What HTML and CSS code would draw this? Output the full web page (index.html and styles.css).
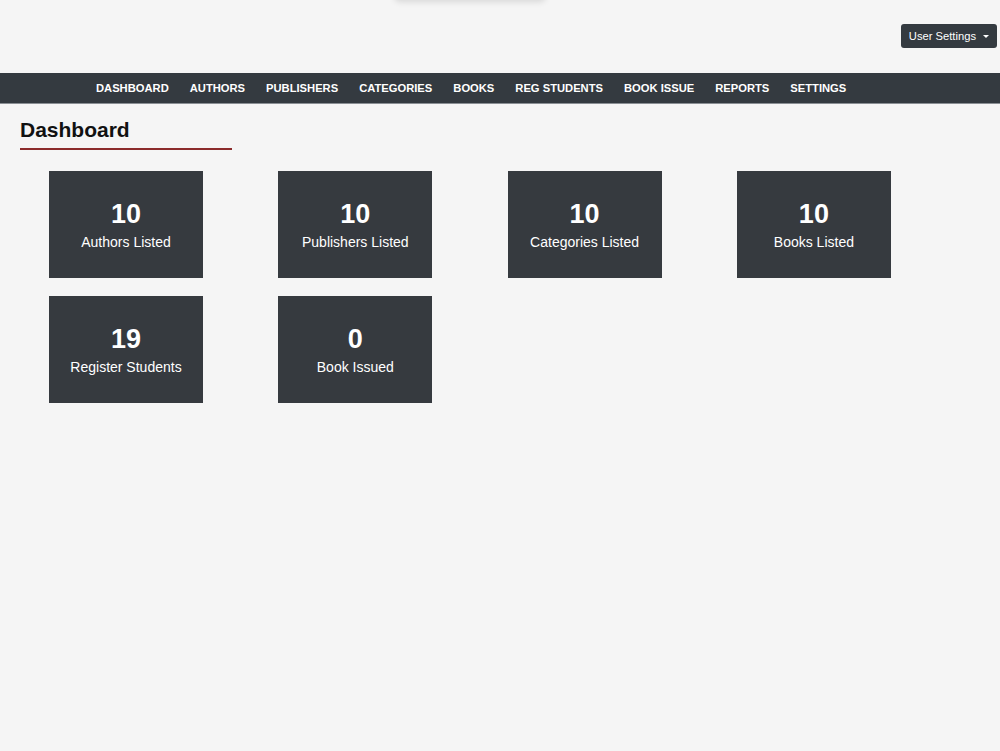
FILE: index.html
```html
<!DOCTYPE html>
<html lang="en">
<head>
  <meta charset="UTF-8">
  <meta name="viewport" content="width=device-width, initial-scale=1.0">
  <title>Library Dashboard</title>
  <link rel="stylesheet" href="styles.css">
</head>
<body>
  <header class="top">
    <div class="logo-shadow"></div>
    <div class="user-row">
      <button class="user-btn">User Settings <span class="caret"></span></button>
    </div>
  </header>

  <nav class="menu">
    <a href="#">Dashboard</a>
    <a href="#">Authors</a>
    <a href="#">Publishers</a>
    <a href="#">Categories</a>
    <a href="#">Books</a>
    <a href="#">Reg Students</a>
    <a href="#">Book Issue</a>
    <a href="#">Reports</a>
    <a href="#">Settings</a>
  </nav>

  <main class="content">
    <h2 class="page-title">Dashboard</h2>
    <div class="cards">
      <div class="card"><div class="count">10</div><div class="label">Authors Listed</div></div>
      <div class="card"><div class="count">10</div><div class="label">Publishers Listed</div></div>
      <div class="card"><div class="count">10</div><div class="label">Categories Listed</div></div>
      <div class="card"><div class="count">10</div><div class="label">Books Listed</div></div>
      <div class="card"><div class="count">19</div><div class="label">Register Students</div></div>
      <div class="card"><div class="count">0</div><div class="label">Book Issued</div></div>
    </div>
  </main>
</body>
</html>
```

FILE: styles.css
```css
body {
  font-family: "Liberation Sans", Arial, sans-serif;
  background: #f5f5f5;
  margin: 0;
  color: #111;
}
.top {
  position: relative;
  height: 73px;
}
.logo-shadow {
  position: absolute;
  top: -10px;
  left: 394px;
  width: 152px;
  height: 10px;
  box-shadow: 0 2px 6px rgba(0,0,0,0.12);
  border-radius: 0 0 6px 6px;
}
.user-row {
  display: flex;
  justify-content: flex-end;
  padding: 24px 3px 0 0;
}
.user-btn {
  background: #343a40;
  color: #fff;
  border: none;
  border-radius: 3px;
  font-family: inherit;
  font-size: 11.2px;
  height: 24px;
  padding: 0 8px;
  display: flex;
  align-items: center;
  gap: 7px;
  cursor: pointer;
}
.caret {
  width: 0;
  height: 0;
  border-left: 3px solid transparent;
  border-right: 3px solid transparent;
  border-top: 3px solid #fff;
}
.menu {
  background: #343a40;
  height: 30px;
  border-bottom: 1px solid #8a8f94;
  display: flex;
  align-items: center;
  padding-left: 96px;
  gap: 21px;
}
.menu a {
  color: #fff;
  text-decoration: none;
  text-transform: uppercase;
  font-weight: bold;
  font-size: 11.2px;
}
.content {
  padding: 0 0 0 20px;
}
.page-title {
  display: inline-block;
  font-size: 21px;
  font-weight: bold;
  margin: 14px 0 0;
  padding-bottom: 6px;
  width: 212px;
  border-bottom: 2px solid #8b2b2b;
  line-height: 24px;
}
.cards {
  display: grid;
  grid-template-columns: repeat(4, 154px);
  column-gap: 75.3px;
  row-gap: 18px;
  padding: 21px 0 0 29px;
}
.card {
  background: #363a3f;
  color: #fff;
  height: 107px;
  display: flex;
  flex-direction: column;
  align-items: center;
  justify-content: center;
}
.count {
  font-size: 27px;
  font-weight: bold;
  line-height: 30px;
  margin-top: 0;
}
.label {
  font-size: 14px;
  line-height: 18px;
  margin-top: 4px;
}
```
